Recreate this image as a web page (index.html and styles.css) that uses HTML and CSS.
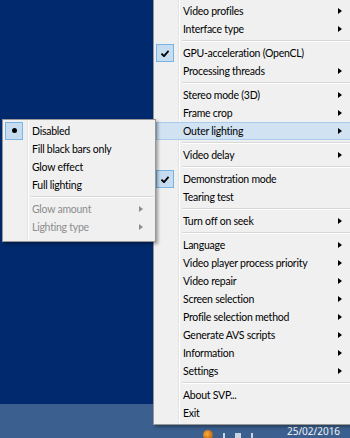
FILE: index.html
```html
<!DOCTYPE html>
<html lang="en">
<head>
  <meta charset="UTF-8">
  <title>SVP menu</title>
  <link rel="stylesheet" href="styles.css">
</head>
<body>
  <div class="desktop">
    <!-- Main tray menu -->
    <div class="menu main-menu">
      <div class="item sub">Video profiles</div>
      <div class="item sub">Interface type</div>
      <div class="sep"></div>
      <div class="item checked">GPU-acceleration (OpenCL)</div>
      <div class="item sub">Processing threads</div>
      <div class="sep"></div>
      <div class="item sub">Stereo mode (3D)</div>
      <div class="item sub">Frame crop</div>
      <div class="item sub active">Outer lighting</div>
      <div class="sep"></div>
      <div class="item sub">Video delay</div>
      <div class="sep"></div>
      <div class="item checked">Demonstration mode</div>
      <div class="item">Tearing test</div>
      <div class="sep"></div>
      <div class="item sub">Turn off on seek</div>
      <div class="sep"></div>
      <div class="item sub">Language</div>
      <div class="item sub">Video player process priority</div>
      <div class="item sub">Video repair</div>
      <div class="item sub">Screen selection</div>
      <div class="item sub">Profile selection method</div>
      <div class="item sub">Generate AVS scripts</div>
      <div class="item sub">Information</div>
      <div class="item sub">Settings</div>
      <div class="sep"></div>
      <div class="item">About SVP...</div>
      <div class="item">Exit</div>
    </div>

    <!-- Outer lighting submenu -->
    <div class="menu sub-menu">
      <div class="item radio">Disabled</div>
      <div class="item">Fill black bars only</div>
      <div class="item">Glow effect</div>
      <div class="item">Full lighting</div>
      <div class="sep"></div>
      <div class="item sub disabled">Glow amount</div>
      <div class="item sub disabled">Lighting type</div>
    </div>
  </div>

  <div class="taskbar">
    <div class="tray">
      <span class="tray-icon orb"></span>
      <span class="tray-icon mark"></span>
      <span class="tray-icon mark wide"></span>
      <span class="tray-icon mark"></span>
    </div>
    <div class="clock">25/02/2016</div>
  </div>
</body>
</html>
```

FILE: styles.css
```css
/* Desktop */
body {
  margin: 0;
  width: 350px;
  height: 438px;
  overflow: hidden;
  font-family: Lato, "Noto Sans", sans-serif;
  font-size: 10.5px;
  letter-spacing: -0.25px;
  background-color: #002a6d;
}

.desktop {
  position: relative;
  height: 404px;
  background-color: #002a6d;
}

.taskbar {
  height: 34px;
  background-color: #3b5f8e;
  display: flex;
  align-items: flex-start;
  padding-left: 203px;
}

.tray {
  display: flex;
  align-items: center;
  gap: 10px;
  padding-top: 26px;
  width: 80px;
}

.tray-icon.orb {
  width: 10px;
  height: 10px;
  border-radius: 50%;
  background: radial-gradient(circle at 40% 40%, #f2b43a, #cf6a16 60%, #5b8a2a);
}

.tray-icon.mark {
  width: 2px;
  height: 5px;
  background-color: #c9d4e2;
}

.tray-icon.mark.wide {
  width: 6px;
}

.clock {
  color: #fff;
  font-family: "Open Sans", sans-serif;
  font-size: 10px;
  line-height: 12px;
  padding-top: 21px;
  padding-left: 4px;
  letter-spacing: 0;
}

/* Menus */
.menu {
  position: absolute;
  background-color: #f0f0f0;
  border: 1px solid #979797;
  padding: 2px 0 2px 0;
  box-shadow: 2px 2px 3px rgba(0, 0, 0, 0.35);
  color: #000;
  background-image: linear-gradient(to right, transparent 24px, #e2e3e3 24px, #e2e3e3 25px, #fff 25px, #fff 26px, transparent 26px);
}

.main-menu {
  left: 153px;
  top: -1px;
  width: 210px;
}

.sub-menu {
  left: 2px;
  top: 119px;
  width: 152px;
  padding-bottom: 5px;
}

.item {
  position: relative;
  height: 18px;
  margin: 0 2px;
  padding-left: 26px;
  white-space: nowrap;
  box-sizing: border-box;
  border: 1px solid transparent;
  line-height: 16px;
}

.item.active {
  background-color: #d1e2f2;
  border-color: #a9cbec;
}

.item.disabled {
  color: #8d8d8d;
}

/* submenu arrow */
.item.sub::after {
  content: "";
  position: absolute;
  top: 5px;
  right: 9px;
  border-left: 4px solid #000;
  border-top: 3.5px solid transparent;
  border-bottom: 3.5px solid transparent;
}

.main-menu .item.sub::after {
  left: 181px;
  right: auto;
}

.item.disabled.sub::after {
  border-left-color: #8d8d8d;
}

/* check / radio box in the gutter */
.item.checked::before,
.item.radio::before {
  content: "";
  position: absolute;
  left: -1px;
  top: -1px;
  width: 18px;
  height: 18px;
  box-sizing: border-box;
  background-color: #c5dcf1;
  border: 1px solid #79b4e4;
}

.item.checked::before {
  background-image: url("data:image/svg+xml,%3Csvg xmlns='http://www.w3.org/2000/svg' width='8' height='7'%3E%3Cpath d='M0.5 3.6 L3 6.2 L7.6 0.8' fill='none' stroke='%23000' stroke-width='1.8'/%3E%3C/svg%3E");
  background-repeat: no-repeat;
  background-position: 4px 5px;
}

.item.radio::after {
  content: "";
  position: absolute;
  left: 6px;
  top: 5px;
  width: 5px;
  height: 5px;
  border-radius: 50%;
  background-color: #000;
}

.sep {
  height: 6px;
  margin-left: 28px;
  margin-right: 2px;
  background: linear-gradient(to bottom, transparent 2px, #d7d7d7 2px, #d7d7d7 3px, #fff 3px, #fff 4px, transparent 4px);
}
```
